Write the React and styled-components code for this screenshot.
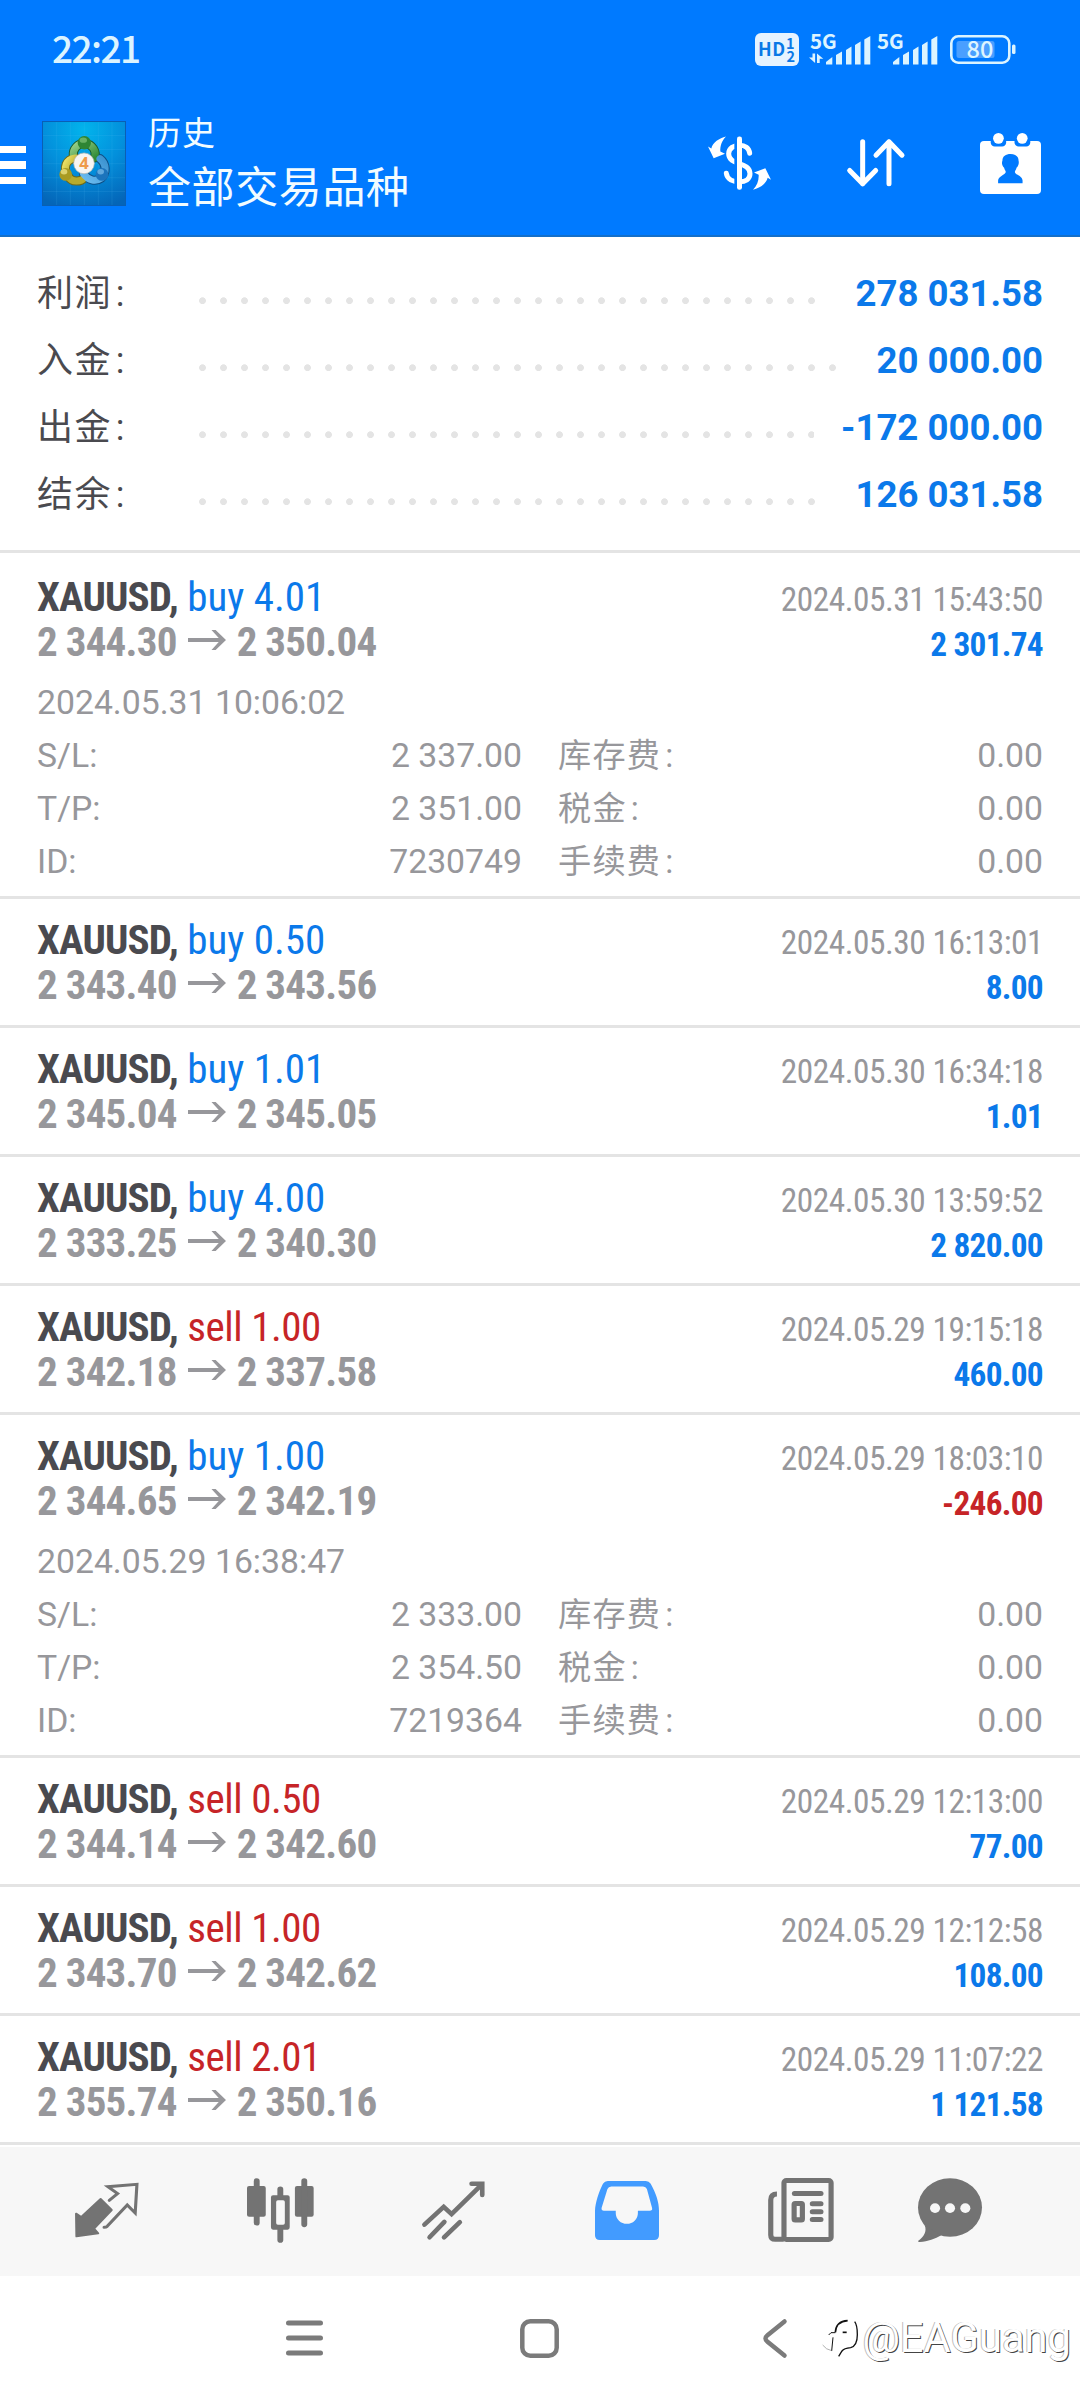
import styled, { createGlobalStyle } from "styled-components";

const GlobalStyle = createGlobalStyle`
  * {
    box-sizing: border-box;
  }
  body {
    margin: 0;
    background: #fff;
    font-family: Roboto, "Noto Sans CJK SC", sans-serif;
  }
  svg {
    display: block;
    flex: none;
    overflow: visible;
  }
`;

const BLUE = "#0b79ea";
const RED = "#c62427";
const GREY = "#97979b";

const Screen = styled.div`
  display: flex;
  flex-direction: column;
  width: 1080px;
  height: 2400px;
  overflow: hidden;
  background: #fff;
`;

const Header = styled.header`
  height: 237px;
  background: #007aff;
  border-bottom: 2px solid #146fc9;
  color: #f2fcff;
`;

const StatusBar = styled.div`
  display: flex;
  align-items: center;
  height: 98px;
  padding: 0 64px 0 52px;
  color: #dcf4ff;
`;

const Clock = styled.span`
  flex: 1;
  margin-bottom: 5px;
  font-family: "Noto Sans CJK SC", sans-serif;
  font-size: 37px;
  font-weight: 500;
  letter-spacing: -1.6px;
  line-height: 50px;
`;

const StatusIcons = styled.div`
  display: flex;
  align-items: center;
`;

const SignalGroup = styled.div`
  display: flex;
  gap: 6px;
  margin: 0 13px 0 10px;
`;

const Toolbar = styled.div`
  display: flex;
  align-items: center;
  height: 130px;
  padding-right: 39px;
`;

const MenuButton = styled.div`
  display: flex;
  flex-direction: column;
  gap: 8.5px;
  width: 26px;
  margin: 4px 16px 0 0;
`;

const MenuLine = styled.span`
  height: 7.2px;
  background: #fff;
`;

const Titles = styled.div`
  flex: 1;
  margin: 0 0 6px 22px;
  font-family: "Noto Sans CJK SC", sans-serif;
`;

const Subtitle = styled.div`
  font-size: 33px;
  line-height: 48px;
  letter-spacing: 1px;
`;

const Title = styled.div`
  font-size: 43px;
  line-height: 59px;
  letter-spacing: 0.6px;
`;

const Actions = styled.div`
  display: flex;
  align-items: center;
  gap: 75.5px;
`;

const Summary = styled.section`
  height: 316px;
  padding: 23px 37px 0;
  border-bottom: 3px solid #e4e4e4;
`;

const SummaryRow = styled.div`
  display: flex;
  height: 67px;
  font-size: 36.6px;
  line-height: 67px;
`;

const SummaryLabel = styled.span`
  width: 155.3px;
  color: #4a4a4f;
  font-size: 36px;
  line-height: 69px;
  letter-spacing: 1.4px;
`;

const Colon = styled.span`
  margin-left: 4px;
`;

const Dots = styled.span`
  flex: 1;
  margin-right: 26.5px;
  background: radial-gradient(
      circle at 10.5px 40.7px,
      #e4e4e4 3px,
      transparent 3.8px
    )
    0 0 / 21px 67px repeat-x;
`;

const SummaryValue = styled.span`
  color: ${BLUE};
  font-weight: 700;
`;

const DealList = styled.main`
  height: 1592px;
  border-bottom: 3px solid #e4e4e4;
`;

const Deal = styled.article`
  height: ${({ $open }) => ($open ? 343 : 129)}px;
  padding: 19px 37px 0;
  border-top: 3px solid #e4e4e4;

  &:first-child {
    border-top-color: transparent;
  }
`;

const DealLine = styled.div`
  display: flex;
  justify-content: space-between;
  align-items: baseline;
  height: 45px;
  font-family: "Roboto Condensed", Roboto, sans-serif;
  font-size: 41px;
  line-height: 45px;
  white-space: pre;
`;

const Instrument = styled.b`
  color: #4a4a4f;
  letter-spacing: -0.85px;
`;

const Side = styled.span`
  color: ${({ $sell }) => ($sell ? RED : BLUE)};
  letter-spacing: ${({ $sell }) => ($sell ? -0.45 : 0)}px;
`;

const Prices = styled.span`
  color: ${GREY};
  font-weight: 700;
  letter-spacing: -0.75px;

  svg {
    display: inline-block;
    margin: 0 11px;
    vertical-align: 6px;
  }
`;

const CloseTime = styled.span`
  color: ${GREY};
  font-size: 33.3px;
  letter-spacing: -0.45px;
`;

const Profit = styled.span`
  color: ${({ $loss }) => ($loss ? RED : BLUE)};
  font-size: 33.3px;
  font-weight: 700;
  letter-spacing: -0.7px;
`;

const Details = styled.div`
  display: grid;
  grid-template-columns: 1fr 1fr;
  column-gap: 36px;
  margin-top: 11px;
  color: ${GREY};
  font-size: 33.75px;
  line-height: 53px;
`;

const OpenTime = styled.div`
  grid-column: 1 / -1;
`;

const Field = styled.div`
  display: flex;
  justify-content: space-between;
  height: 53px;
`;

const FeeLabel = styled.span`
  font-size: 33.2px;
  letter-spacing: 1.2px;
`;

const TabBar = styled.nav`
  display: grid;
  grid-template-columns: repeat(5, 173.7px) 124px;
  place-items: center;
  height: 129px;
  margin-top: 2px;
  padding: 0 0 3px 19.5px;
  background: #f7f7f7;
`;

const SystemNav = styled.footer`
  position: relative;
  display: grid;
  grid-template-columns: repeat(3, 235.3px);
  place-items: center;
  height: 124px;
  padding-left: 186.5px;
`;

const Watermark = styled.div`
  position: absolute;
  top: 34px;
  right: 9px;
  display: flex;
  align-items: center;
  gap: 3px;
  color: #fff;
  font-size: 41.7px;
  line-height: 56px;
  text-shadow: 1px 1px 0.5px #444, -1px 0 0.5px #bbb;
`;

function HdBadge() {
  return (
    <svg width="44" height="33" viewBox="0 0 44 33">
      <rect width="44" height="33" rx="6" fill="#e6f3ff" />
      <g fill="#0a78e6" fontFamily="Noto Sans CJK SC" fontWeight="700">
        <text x="3" y="23" fontSize="18" textLength="27">
          HD
        </text>
        <text x="31" y="15.5" fontSize="14.5">
          1
        </text>
        <text x="31.5" y="28.8" fontSize="14.5">
          2
        </text>
      </g>
    </svg>
  );
}

function Signal({ data }) {
  return (
    <svg width="61" height="32" viewBox="0 0 61 32">
      <text
        x="1"
        y="15.7"
        fontSize="20.5"
        fontFamily="Noto Sans CJK SC"
        fontWeight="700"
        fill="#dcf4ff"
      >
        5G
      </text>
      <g fill="#dcf4ff">
        <path d="M17 31.5v-2.5l6.3-5v7.5z" />
        <path d="M27 31.5V22l6-3.5v13z" />
        <path d="M37 31.5V17l5.5-3.5v18z" />
        <path d="M46 31.5V12l5.6-3.5v23z" />
        <path d="M55.3 31.5V6.5l6-3.5v28.5z" />
        {data && (
          <path d="M3.5 20.5h2.6v9.5L0 24.5h3.5zM8 30V20.5l6.3 5.3h-3.6V30z" />
        )}
      </g>
    </svg>
  );
}

function Battery() {
  return (
    <svg width="66" height="29" viewBox="0 0 66 29">
      <rect
        x="1.3"
        y="1.3"
        width="58"
        height="26.4"
        rx="7"
        fill="none"
        stroke="#dcf4ff"
        strokeWidth="2.6"
      />
      <rect x="6.5" y="6" width="38" height="17" rx="2.5" fill="#4a9fff" />
      <rect x="62" y="9.5" width="3.5" height="9.5" rx="1.5" fill="#dcf4ff" />
      <text
        x="30"
        y="23"
        fontSize="23.5"
        fontFamily="Noto Sans CJK SC"
        fontWeight="500"
        textAnchor="middle"
        fill="#dcf4ff"
      >
        80
      </text>
    </svg>
  );
}

function AppLogo() {
  return (
    <svg width="84" height="85" viewBox="18 22 252 253" preserveAspectRatio="none">
      <defs>
        <radialGradient id="sky" cx="0.5" cy="0.1" r="0.95">
          <stop offset="0" stopColor="#02b4ec" />
          <stop offset="0.5" stopColor="#0390dc" />
          <stop offset="1" stopColor="#0465b8" />
        </radialGradient>
        <linearGradient id="green" x1="0" y1="0" x2="1" y2="1">
          <stop offset="0" stopColor="#9ad18a" />
          <stop offset="1" stopColor="#2f8a34" />
        </linearGradient>
        <linearGradient id="gold" x1="0" y1="0" x2="1" y2="1">
          <stop offset="0" stopColor="#eee36a" />
          <stop offset="1" stopColor="#a89a1c" />
        </linearGradient>
        <linearGradient id="azure" x1="1" y1="0" x2="0" y2="1">
          <stop offset="0" stopColor="#3c93d0" />
          <stop offset="1" stopColor="#6cbcf0" />
        </linearGradient>
      </defs>
      <rect x="18" y="22" width="252" height="253" fill="url(#sky)" />
      <path
        d="M18 65h252M18 107h252M18 149h252M18 191h252M18 232h252M62 22v253M103 22v253M145 22v253M187 22v253M228 22v253"
        stroke="#5fc3f5"
        strokeOpacity="0.2"
        strokeWidth="2"
      />
      <g fill="none" strokeWidth="21" strokeLinecap="round">
        <path d="M112 126a33 33 0 1 1 64 6" stroke="#1c5c2c" strokeWidth="27" />
        <path d="M96 186c-16-26-6-50 22-54" stroke="#6d6a1a" strokeWidth="27" />
        <path d="M96 186c12 20 38 18 50 4" stroke="#6d6a1a" strokeWidth="27" />
        <path d="M192 134c20 16 20 42 4 58-18 12-40 6-54-14" stroke="#0d4f86" strokeWidth="27" />
        <path d="M112 126a33 33 0 1 1 64 6" stroke="url(#green)" />
        <path d="M96 186c-16-26-6-50 22-54" stroke="url(#gold)" />
        <path d="M96 186c12 20 38 18 50 4" stroke="#b8ab2c" />
        <path d="M192 134c20 16 20 42 4 58-18 12-40 6-54-14" stroke="url(#azure)" />
      </g>
      <circle cx="145" cy="87" r="20" fill="#2e8534" />
      <ellipse cx="142" cy="79" rx="11" ry="8" fill="#8fce86" opacity="0.6" />
      <circle cx="89" cy="181" r="19" fill="#a99b22" />
      <ellipse cx="84" cy="173" rx="10" ry="8" fill="#f3ea90" opacity="0.7" />
      <circle cx="198" cy="181" r="19" fill="#1c74bc" />
      <ellipse cx="194" cy="173" rx="10" ry="8" fill="#8fcbf3" opacity="0.6" />
      <circle cx="144" cy="148" r="31" fill="#f7f5f2" stroke="#b5b5b0" strokeWidth="2" />
      <text
        x="144"
        y="166"
        fontSize="50"
        fontWeight="700"
        fontFamily="Open Sans"
        textAnchor="middle"
        fill="#ee9a4a"
      >
        4
      </text>
      <rect x="19.5" y="23.5" width="249" height="250" fill="none" stroke="#0a5fb4" strokeWidth="3" />
    </svg>
  );
}

function CurrencyIcon() {
  return (
    <svg width="63" height="54" viewBox="84 410 189 161">
      <path
        d="M209 461c-2-16-14-24-30-24-17 0-33 9-33 26 0 36 64 22 64 60 0 16-15 24-31 24-20 0-38-8-40-26"
        fill="none"
        stroke="#fff"
        strokeWidth="15"
        strokeLinecap="round"
      />
      <path d="M163 425h9v135h-9z" fill="#007aff" />
      <rect x="171" y="411" width="15" height="160" rx="7" fill="#fff" />
      <g fill="#fff">
        <path d="M138 411c-20 5-40 18-44 36l-10-6 17 35 34-13-14-7c-1-17 5-33 17-45z" />
        <path
          d="M138 411c-20 5-40 18-44 36l-10-6 17 35 34-13-14-7c-1-17 5-33 17-45z"
          transform="rotate(180 178.5 491)"
        />
      </g>
    </svg>
  );
}

function SortIcon() {
  return (
    <svg width="58" height="48" viewBox="500 419 174 143">
      <path
        d="M547 427v126M508 513l39 40 39-40M626 553V427M587 467l39-40 39 40"
        fill="none"
        stroke="#fff"
        strokeWidth="15"
        strokeLinecap="round"
        strokeLinejoin="round"
      />
    </svg>
  );
}

function CalendarIcon() {
  return (
    <svg width="61" height="61" viewBox="900 396 182 182">
      <rect x="900" y="420" width="182" height="158" rx="12" fill="#fff" />
      <g fill="#007aff">
        <path d="M932 418h46v8q-2 10-12 10h-22q-10 0-12-10zM1003 418h47v8q-2 10-12 10h-23q-10 0-12-10z" />
        <path d="M967 478c0-12 10-19 24-19s24 7 24 19c2 8 0 16-6 22-1 5-4 8-5 12 2 9 22 12 23 26v8h-73v-8c1-14 21-17 23-26-1-4-4-7-5-12-6-6-8-14-5-22z" />
      </g>
      <circle cx="955" cy="412" r="16" fill="#fff" />
      <circle cx="1026" cy="412" r="16" fill="#fff" />
    </svg>
  );
}

function PriceArrow() {
  return (
    <svg width="38" height="20" viewBox="546 240 110 60" preserveAspectRatio="none">
      <path d="M546 264H635L614 240H626L656 270L626 300H614L635 276H546z" fill={GREY} />
    </svg>
  );
}

function QuotesIcon() {
  return (
    <svg width="65" height="56" viewBox="218 160 188 168" preserveAspectRatio="none">
      <path
        d="M320 215L344 195L316 174L400 167L395 253L372 229L314 293Q311 296 305 296"
        fill="none"
        stroke="#737373"
        strokeWidth="9"
        strokeLinecap="round"
      />
      <path
        d="M295 211L327 244L276 300L288 314L225 323L224 255L239 265Z"
        fill="#737373"
        stroke="#737373"
        strokeWidth="6"
        strokeLinejoin="round"
      />
    </svg>
  );
}

function ChartIcon() {
  return (
    <svg width="67" height="65" viewBox="717 145 193 195" preserveAspectRatio="none">
      <g fill="#737373">
        <rect x="717" y="169" width="54" height="92" rx="6" />
        <rect x="855" y="169" width="54" height="92" rx="6" />
        <path
          fillRule="evenodd"
          d="M792 197h42q6 0 6 6v90q0 7-6 7h-42q-6 0-6-7v-90q0-6 6-6zM806 212q-5 0-5 5v63q0 5 5 5h15q5 0 5-5v-63q0-5-5-5z"
        />
      </g>
      <path
        d="M745 154v125M882 154v130M813 179v20M813 300v31"
        stroke="#737373"
        strokeWidth="17"
        strokeLinecap="round"
      />
    </svg>
  );
}

function TradeIcon() {
  return (
    <svg width="63" height="59" viewBox="1224 152 183 176" preserveAspectRatio="none">
      <path
        d="M1231 282L1287 229L1310 251L1398 162M1368 160H1399V194M1289 274L1246 320M1334 275L1288 320"
        fill="none"
        stroke="#737373"
        strokeWidth="13.5"
        strokeLinecap="round"
      />
    </svg>
  );
}

function HistoryIcon() {
  return (
    <svg width="64" height="59" viewBox="161 152 185 175" preserveAspectRatio="none">
      <path
        fillRule="evenodd"
        fill="#429bff"
        d="M198 152H308q9 0 14 8C338 190 346 215 346 240V313q0 14-14 14H175q-14 0-14-14V240C162 215 172 185 184 160q5-8 14-8zM208 168q-8 0-11 8L180 232q-1 8 7 8H221V247a32 32 0 0 0 64 0V240H319q9 0 7-8L311 176q-3-8-11-8z"
      />
    </svg>
  );
}

function NewsIcon() {
  return (
    <svg width="66" height="64" viewBox="664 144 192 191" preserveAspectRatio="none">
      <g fill="none" stroke="#737373" strokeWidth="15">
        <rect x="710.5" y="151.5" width="137" height="176" rx="7" />
        <path d="M690 192q-18 0-18 18V314q0 13 13 13H710" />
        <path d="M741 190H818" strokeLinecap="round" />
        <path d="M793 221H818M793 244.5H818M793 268H818" strokeLinecap="round" />
        <rect x="740" y="220" width="24" height="49" rx="3" />
      </g>
    </svg>
  );
}

function ChatIcon() {
  return (
    <svg width="64" height="64" viewBox="1101 144 184 191" preserveAspectRatio="none">
      <g fill="#737373">
        <ellipse cx="1193" cy="232" rx="92" ry="87.5" />
        <path d="M1120 284C1128 304 1117 320 1101 332C1102 335 1104 335 1106 335C1130 334 1150 325 1168 315Z" />
      </g>
      <g fill="#f7f7f7">
        <circle cx="1150" cy="234" r="14.5" />
        <circle cx="1193" cy="234" r="14.5" />
        <circle cx="1237" cy="234" r="14.5" />
      </g>
    </svg>
  );
}

function RecentsIcon() {
  return (
    <svg width="37" height="36" viewBox="0 0 37 36">
      <path
        d="M2.5 3H34.5M2.5 18H34.5M2.5 33H34.5"
        stroke="#7b7b7b"
        strokeWidth="5"
        strokeLinecap="round"
      />
    </svg>
  );
}

function HomeIcon() {
  return (
    <svg width="39" height="39" viewBox="0 0 39 39">
      <rect
        x="2.3"
        y="2.3"
        width="34.4"
        height="34.4"
        rx="8"
        fill="none"
        stroke="#7b7b7b"
        strokeWidth="4.5"
      />
    </svg>
  );
}

function BackIcon() {
  return (
    <svg width="24" height="39" viewBox="0 0 24 39">
      <path
        d="M21.5 2.5L4.5 16.2Q0.5 19.5 4.5 22.8L21.5 36.5"
        fill="none"
        stroke="#7b7b7b"
        strokeWidth="4.5"
        strokeLinecap="round"
      />
    </svg>
  );
}

function WatermarkLogo() {
  return (
    <svg width="37" height="38" viewBox="28 48 111 114">
      <g fill="none" stroke="#111" strokeWidth="4">
        <path d="M68 88Q70 55 105 53" strokeWidth="5" />
        <path d="M48 96L55 89H68M61 103L57 144" strokeWidth="3" />
        <path d="M57 143Q40 140 30 126" stroke="#888" strokeWidth="2" />
        <path d="M90 88H102" strokeWidth="5" />
        <path d="M126 56Q134 66 134 95Q134 128 114 134Q94 136 88 144L78 160" />
      </g>
    </svg>
  );
}

const totals = [
  ["利润", "278 031.58"],
  ["入金", "20 000.00"],
  ["出金", "-172 000.00"],
  ["结余", "126 031.58"],
];

const deals = [
  {
    side: "buy",
    volume: "4.01",
    open: "2 344.30",
    close: "2 350.04",
    time: "2024.05.31 15:43:50",
    profit: "2 301.74",
    details: {
      openTime: "2024.05.31 10:06:02",
      sl: "2 337.00",
      tp: "2 351.00",
      id: "7230749",
    },
  },
  { side: "buy", volume: "0.50", open: "2 343.40", close: "2 343.56", time: "2024.05.30 16:13:01", profit: "8.00" },
  { side: "buy", volume: "1.01", open: "2 345.04", close: "2 345.05", time: "2024.05.30 16:34:18", profit: "1.01" },
  { side: "buy", volume: "4.00", open: "2 333.25", close: "2 340.30", time: "2024.05.30 13:59:52", profit: "2 820.00" },
  { side: "sell", volume: "1.00", open: "2 342.18", close: "2 337.58", time: "2024.05.29 19:15:18", profit: "460.00" },
  {
    side: "buy",
    volume: "1.00",
    open: "2 344.65",
    close: "2 342.19",
    time: "2024.05.29 18:03:10",
    profit: "-246.00",
    details: {
      openTime: "2024.05.29 16:38:47",
      sl: "2 333.00",
      tp: "2 354.50",
      id: "7219364",
    },
  },
  { side: "sell", volume: "0.50", open: "2 344.14", close: "2 342.60", time: "2024.05.29 12:13:00", profit: "77.00" },
  { side: "sell", volume: "1.00", open: "2 343.70", close: "2 342.62", time: "2024.05.29 12:12:58", profit: "108.00" },
  { side: "sell", volume: "2.01", open: "2 355.74", close: "2 350.16", time: "2024.05.29 11:07:22", profit: "1 121.58" },
];

function DealDetails({ details }) {
  const rows = [
    ["S/L:", details.sl, "库存费"],
    ["T/P:", details.tp, "税金"],
    ["ID:", details.id, "手续费"],
  ];

  return (
    <Details>
      <OpenTime>{details.openTime}</OpenTime>
      {rows.map(([label, value, fee]) => [
        <Field key={label}>
          <span>{label}</span>
          <span>{value}</span>
        </Field>,
        <Field key={fee}>
          <FeeLabel>
            {fee}
            <Colon>:</Colon>
          </FeeLabel>
          <span>0.00</span>
        </Field>,
      ])}
    </Details>
  );
}

function DealRow({ deal }) {
  return (
    <Deal $open={Boolean(deal.details)}>
      <DealLine>
        <span>
          <Instrument>XAUUSD,</Instrument>{" "}
          <Side $sell={deal.side === "sell"}>
            {deal.side} {deal.volume}
          </Side>
        </span>
        <CloseTime>{deal.time}</CloseTime>
      </DealLine>
      <DealLine>
        <Prices>
          {deal.open}
          <PriceArrow />
          {deal.close}
        </Prices>
        <Profit $loss={deal.profit.startsWith("-")}>{deal.profit}</Profit>
      </DealLine>
      {deal.details && <DealDetails details={deal.details} />}
    </Deal>
  );
}

export default function App() {
  return (
    <Screen>
      <GlobalStyle />
      <Header>
        <StatusBar>
          <Clock>22:21</Clock>
          <StatusIcons>
            <HdBadge />
            <SignalGroup>
              <Signal data />
              <Signal />
            </SignalGroup>
            <Battery />
          </StatusIcons>
        </StatusBar>
        <Toolbar>
          <MenuButton>
            <MenuLine />
            <MenuLine />
            <MenuLine />
          </MenuButton>
          <AppLogo />
          <Titles>
            <Subtitle>历史</Subtitle>
            <Title>全部交易品种</Title>
          </Titles>
          <Actions>
            <CurrencyIcon />
            <SortIcon />
            <CalendarIcon />
          </Actions>
        </Toolbar>
      </Header>

      <Summary>
        {totals.map(([label, value]) => (
          <SummaryRow key={label}>
            <SummaryLabel>
              {label}
              <Colon>:</Colon>
            </SummaryLabel>
            <Dots />
            <SummaryValue>{value}</SummaryValue>
          </SummaryRow>
        ))}
      </Summary>

      <DealList>
        {deals.map((deal) => (
          <DealRow key={deal.time} deal={deal} />
        ))}
      </DealList>

      <TabBar>
        <QuotesIcon />
        <ChartIcon />
        <TradeIcon />
        <HistoryIcon />
        <NewsIcon />
        <ChatIcon />
      </TabBar>

      <SystemNav>
        <RecentsIcon />
        <HomeIcon />
        <BackIcon />
        <Watermark>
          <WatermarkLogo />
          <span>@EAGuang</span>
        </Watermark>
      </SystemNav>
    </Screen>
  );
}
